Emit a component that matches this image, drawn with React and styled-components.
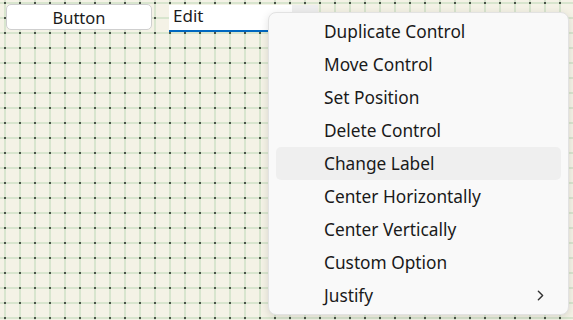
import React from 'react';
import styled, { createGlobalStyle } from 'styled-components';
import { ChevronRight } from 'lucide-react';

const GlobalStyle = createGlobalStyle`
    html, body {
        margin: 0;
        padding: 0;
        overflow: hidden;
    }
    body {
        font-family: "Noto Sans", "Noto Sans CJK KR", sans-serif;
    }
`;

const Canvas = styled.div`
    position: relative;
    width: 573px;
    height: 320px;
    background-color: #f4f2e6;
    background-image:
        radial-gradient(circle at 5px 3px, #4c5249 0.9px, transparent 1.4px),
        linear-gradient(to right, transparent 4px, #d8e5ce 4px, #d8e5ce 6px, transparent 6px),
        linear-gradient(to bottom, transparent 2px, #d8e5ce 2px, #d8e5ce 4px, transparent 4px);
    background-size: 15px 15px;
    overflow: hidden;
`;

const PushButton = styled.div`
    position: absolute;
    left: 6px;
    top: 4px;
    width: 146px;
    height: 26px;
    box-sizing: border-box;
    border: 1px solid #cfcfcf;
    border-radius: 5px;
    background: #ffffff;
    display: flex;
    align-items: center;
    justify-content: center;
    font-size: 16.5px;
    color: #1b1b1b;
`;

const EditBox = styled.div`
    position: absolute;
    left: 169px;
    top: 5px;
    width: 149px;
    height: 27px;
    box-sizing: border-box;
    background: #ffffff;
    border-bottom: 2px solid #0067c0;
    display: flex;
`;

const EditText = styled.div`
    flex: 1;
    padding-left: 4px;
    font-size: 17px;
    line-height: 22px;
    color: #1b1b1b;
`;

const EditEnd = styled.div`
    width: 26px;
    background: #eeeeee;
`;

const Menu = styled.div`
    position: absolute;
    left: 268px;
    top: 12px;
    width: 301px;
    height: 303px;
    box-sizing: border-box;
    padding: 2px 7px;
    border: 1px solid #e2e2e2;
    border-radius: 8px;
    background: #f9f9f9;
    box-shadow: 0 2px 8px rgba(0, 0, 0, 0.12);
    display: flex;
    flex-direction: column;
`;

const Item = styled.div`
    height: 33px;
    flex: none;
    display: flex;
    align-items: center;
    justify-content: space-between;
    padding: 0 12px 1px 48px;
    box-sizing: border-box;
    border-radius: 5px;
    background: ${props => props.active ? '#efefef' : 'transparent'};
    font-size: 17.3px;
    color: #1a1a1a;
`;

const items = [
    'Duplicate Control',
    'Move Control',
    'Set Position',
    'Delete Control',
    'Change Label',
    'Center Horizontally',
    'Center Vertically',
    'Custom Option',
];

const App = () => {
    return (
        <Canvas>
            <GlobalStyle />
            <PushButton>Button</PushButton>
            <EditBox>
                <EditText>Edit</EditText>
                <EditEnd />
            </EditBox>
            <Menu>
                {items.map(item => (
                    <Item key={item} active={item === 'Change Label'}>{item}</Item>
                ))}
                <Item>
                    Justify
                    <ChevronRight size={17} strokeWidth={2} color="#333" />
                </Item>
            </Menu>
        </Canvas>
    );
};

export default App;
